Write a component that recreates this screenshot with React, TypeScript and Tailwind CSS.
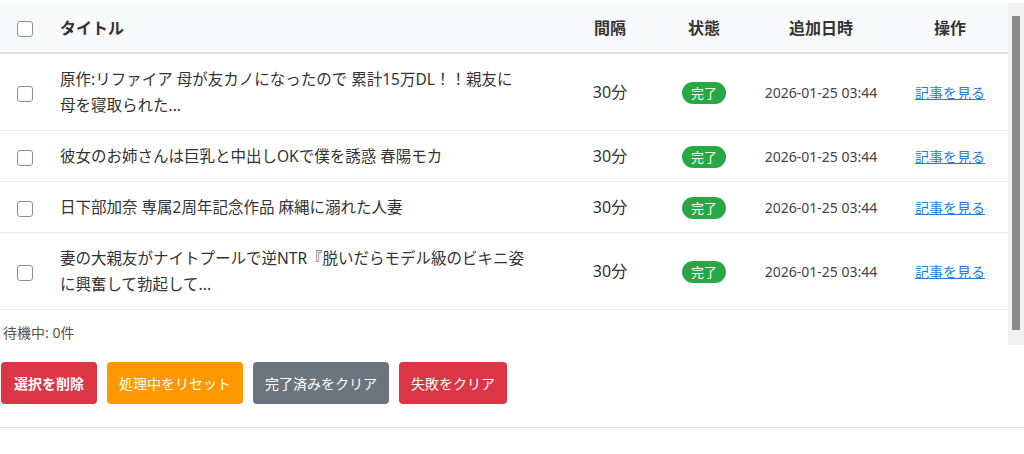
const rows = [
  { title: '原作:リファイア 母が友カノになったので 累計15万DL！！親友に\n母を寝取られた...' },
  { title: '彼女のお姉さんは巨乳と中出しOKで僕を誘惑 春陽モカ' },
  { title: '日下部加奈 専属2周年記念作品 麻縄に溺れた人妻' },
  { title: '妻の大親友がナイトプールで逆NTR『脱いだらモデル級のビキニ姿\nに興奮して勃起して...' },
];

function Checkbox() {
  return (
    <span className="inline-block w-4 h-4 rounded-[3px] border border-[#8f8f8f] bg-white align-middle" />
  );
}

export default function App() {
  return (
    <div
      className="w-[1024px] bg-white pt-[3px] text-[#333]"
      style={{ fontFamily: '"Noto Sans", "Noto Sans CJK JP", sans-serif' }}
    >
      <div className="flex h-[342px]">
        <div className="flex-1 overflow-hidden">
          <table className="w-full table-fixed border-collapse">
            <colgroup>
              <col className="w-[50px]" />
              <col />
              <col className="w-[96px]" />
              <col className="w-[92px]" />
              <col className="w-[142px]" />
              <col className="w-[116px]" />
            </colgroup>
            <thead>
              <tr className="bg-[#f8f9fa] border-b-2 border-[#dee2e6] h-[50px]">
                <th className="text-center">
                  <Checkbox />
                </th>
                <th className="text-left pl-[10px] text-[16px] font-bold">タイトル</th>
                <th className="text-center text-[16px] font-bold">間隔</th>
                <th className="text-center text-[16px] font-bold">状態</th>
                <th className="text-center text-[16px] font-bold">追加日時</th>
                <th className="text-center text-[16px] font-bold">操作</th>
              </tr>
            </thead>
            <tbody>
              {rows.map((r, i) => (
                <tr key={i} className="border-b border-[#eceeef]">
                  <td className="text-center py-3">
                    <Checkbox />
                  </td>
                  <td className="pl-[10px] pr-[4px] py-3 text-[15.5px] leading-[26px] whitespace-pre-line">
                    {r.title}
                  </td>
                  <td className="text-center text-[16px]">30分</td>
                  <td className="text-center">
                    <span className="inline-flex items-center h-[22px] px-[9px] rounded-full bg-[#28a745] text-white text-[13px]">
                      完了
                    </span>
                  </td>
                  <td className="text-center text-[14px] text-[#444]">2026-01-25 03:44</td>
                  <td className="text-center">
                    <a href="#" className="text-[14px] text-[#1a7fe0] underline">
                      記事を見る
                    </a>
                  </td>
                </tr>
              ))}
            </tbody>
          </table>
          <p className="mt-[13px] pl-[3px] text-[14px] leading-5 text-[#555]">待機中: 0件</p>
        </div>
        <div className="w-4 bg-[#f1f1f1] flex flex-col px-[4px] pt-[13px] pb-[15px]">
          <div className="flex-1 bg-[#8a8a8a]" />
        </div>
      </div>

      <div className="flex gap-[10px] mt-[17px] pl-[1px]">
        <button className="h-[42px] px-[13px] rounded-[4px] bg-[#dc3545] text-white text-[14px] font-bold">
          選択を削除
        </button>
        <button className="h-[42px] px-3 rounded-[4px] bg-[#ff9800] text-white text-[14px]">
          処理中をリセット
        </button>
        <button className="h-[42px] px-3 rounded-[4px] bg-[#6c757d] text-white text-[14px]">
          完了済みをクリア
        </button>
        <button className="h-[42px] px-3 rounded-[4px] bg-[#dc3545] text-white text-[14px]">
          失敗をクリア
        </button>
      </div>

      <div className="mt-[23px] border-t border-[#e3e3e3] h-[26px]" />
    </div>
  );
}
